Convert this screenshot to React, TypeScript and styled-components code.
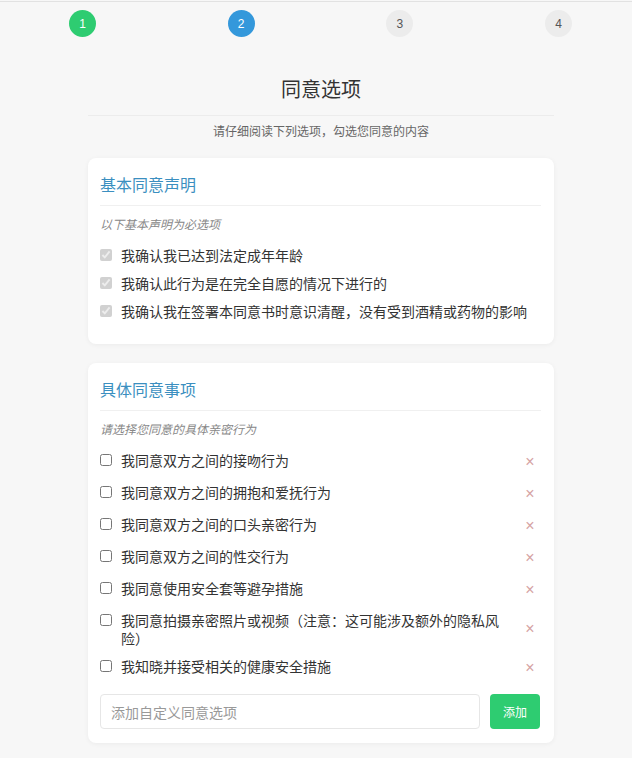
import * as React from 'react'
import styled, {createGlobalStyle} from 'styled-components'

const GlobalStyle = createGlobalStyle`
  html, body {
    margin: 0;
    padding: 0;
    background: #f7f7f7;
    font-family: "Noto Sans CJK SC", "Noto Sans", "Liberation Sans", sans-serif;
    color: #333;
  }
  * { box-sizing: border-box; }
`

const Page = styled.div`
  margin-top: 1px;
  border-top: 1px solid #e2e2e2;
  min-height: 756px;
`

const Steps = styled.div`
  display: flex;
  justify-content: space-between;
  padding: 8px 60px 0 69px;
`

const Step = styled.div<{$state: 'done' | 'active' | 'todo'}>`
  width: 27px;
  height: 27px;
  border-radius: 50%;
  display: flex;
  align-items: center;
  justify-content: center;
  font-family: "Liberation Sans", sans-serif;
  font-size: 12px;
  background: ${p =>
    p.$state === 'done' ? '#2ecc71' : p.$state === 'active' ? '#3498db' : '#ececec'};
  color: ${p => (p.$state === 'todo' ? '#555' : '#fff')};
`

const Content = styled.div`
  width: 466px;
  margin-left: 88px;
`

const Title = styled.h1`
  margin: 38px 0 0;
  padding-bottom: 12px;
  border-bottom: 1px solid #ececec;
  text-align: center;
  font-size: 20px;
  line-height: 28px;
  font-weight: 400;
  color: #333;
`

const Subtitle = styled.p`
  margin: 6px 0 18px;
  text-align: center;
  font-size: 12px;
  line-height: 18px;
  color: #666;
`

const Card = styled.section`
  background: #fff;
  border-radius: 8px;
  box-shadow: 0 1px 5px rgba(0, 0, 0, 0.05);
  padding: 14px 13px 14px 12px;
  & + & {
    margin-top: 19px;
  }
`

const CardTitle = styled.h2`
  margin: 0;
  padding-bottom: 9px;
  border-bottom: 1px solid #f0f0f0;
  font-size: 16px;
  line-height: 24px;
  font-weight: 400;
  color: #3b8fc0;
`

const Note = styled.p`
  margin: 9px 0 8px;
  font-size: 12px;
  line-height: 18px;
  font-style: italic;
  color: #888;
`

const List = styled.ul<{$spaced?: boolean}>`
  list-style: none;
  margin: 0 0 ${p => (p.$spaced ? '0' : '5px')};
  padding: 0;
`

// rows with a remove button get their height from the button
const Item = styled.li<{$tall?: boolean}>`
  display: flex;
  align-items: flex-start;
  padding: 5px 0;
  min-height: ${p => (p.$tall ? '32px' : '28px')};
`

const Check = styled.input`
  width: 12px;
  height: 12px;
  margin: 3px 9px 0 0;
  flex: none;
`

const Label = styled.span`
  flex: 1;
  font-size: 14px;
  line-height: 18px;
  color: #333;
`

const Remove = styled.button`
  flex: none;
  align-self: center;
  width: 12px;
  height: 22px;
  margin: 0 5px 0 18px;
  padding: 0;
  border: none;
  background: none;
  font-family: "Liberation Sans", sans-serif;
  font-size: 16px;
  line-height: 22px;
  color: #d6a3a3;
`

const AddRow = styled.div`
  display: flex;
  gap: 10px;
  margin-top: 10px;
  padding-right: 1px;
`

const AddInput = styled.input`
  flex: 1;
  height: 35px;
  border: 1px solid #e6e6e6;
  border-radius: 4px;
  padding: 0 10px;
  font-family: inherit;
  font-size: 14px;
  color: #333;
  &::placeholder {
    color: #999;
  }
`

const AddButton = styled.button`
  width: 50px;
  height: 35px;
  border: none;
  border-radius: 4px;
  background: #2ecc71;
  color: #fff;
  font-family: inherit;
  font-size: 12px;
`

const basics = [
  '我确认我已达到法定成年年龄',
  '我确认此行为是在完全自愿的情况下进行的',
  '我确认我在签署本同意书时意识清醒，没有受到酒精或药物的影响',
]

const specifics = [
  '我同意双方之间的接吻行为',
  '我同意双方之间的拥抱和爱抚行为',
  '我同意双方之间的口头亲密行为',
  '我同意双方之间的性交行为',
  '我同意使用安全套等避孕措施',
  '我同意拍摄亲密照片或视频（注意：这可能涉及额外的隐私风险）',
  '我知晓并接受相关的健康安全措施',
]

export default function App() {
  return (
    <Page>
      <GlobalStyle />
      <Steps>
        <Step $state="done">1</Step>
        <Step $state="active">2</Step>
        <Step $state="todo">3</Step>
        <Step $state="todo">4</Step>
      </Steps>
      <Content>
        <Title>同意选项</Title>
        <Subtitle>请仔细阅读下列选项，勾选您同意的内容</Subtitle>

        <Card>
          <CardTitle>基本同意声明</CardTitle>
          <Note>以下基本声明为必选项</Note>
          <List>
            {basics.map(text => (
              <Item key={text}>
                <Check type="checkbox" checked disabled readOnly />
                <Label>{text}</Label>
              </Item>
            ))}
          </List>
        </Card>

        <Card>
          <CardTitle>具体同意事项</CardTitle>
          <Note>请选择您同意的具体亲密行为</Note>
          <List $spaced>
            {specifics.map(text => (
              <Item key={text} $tall>
                <Check type="checkbox" />
                <Label>{text}</Label>
                <Remove type="button">×</Remove>
              </Item>
            ))}
          </List>
          <AddRow>
            <AddInput placeholder="添加自定义同意选项" />
            <AddButton type="button">添加</AddButton>
          </AddRow>
        </Card>
      </Content>
    </Page>
  )
}
